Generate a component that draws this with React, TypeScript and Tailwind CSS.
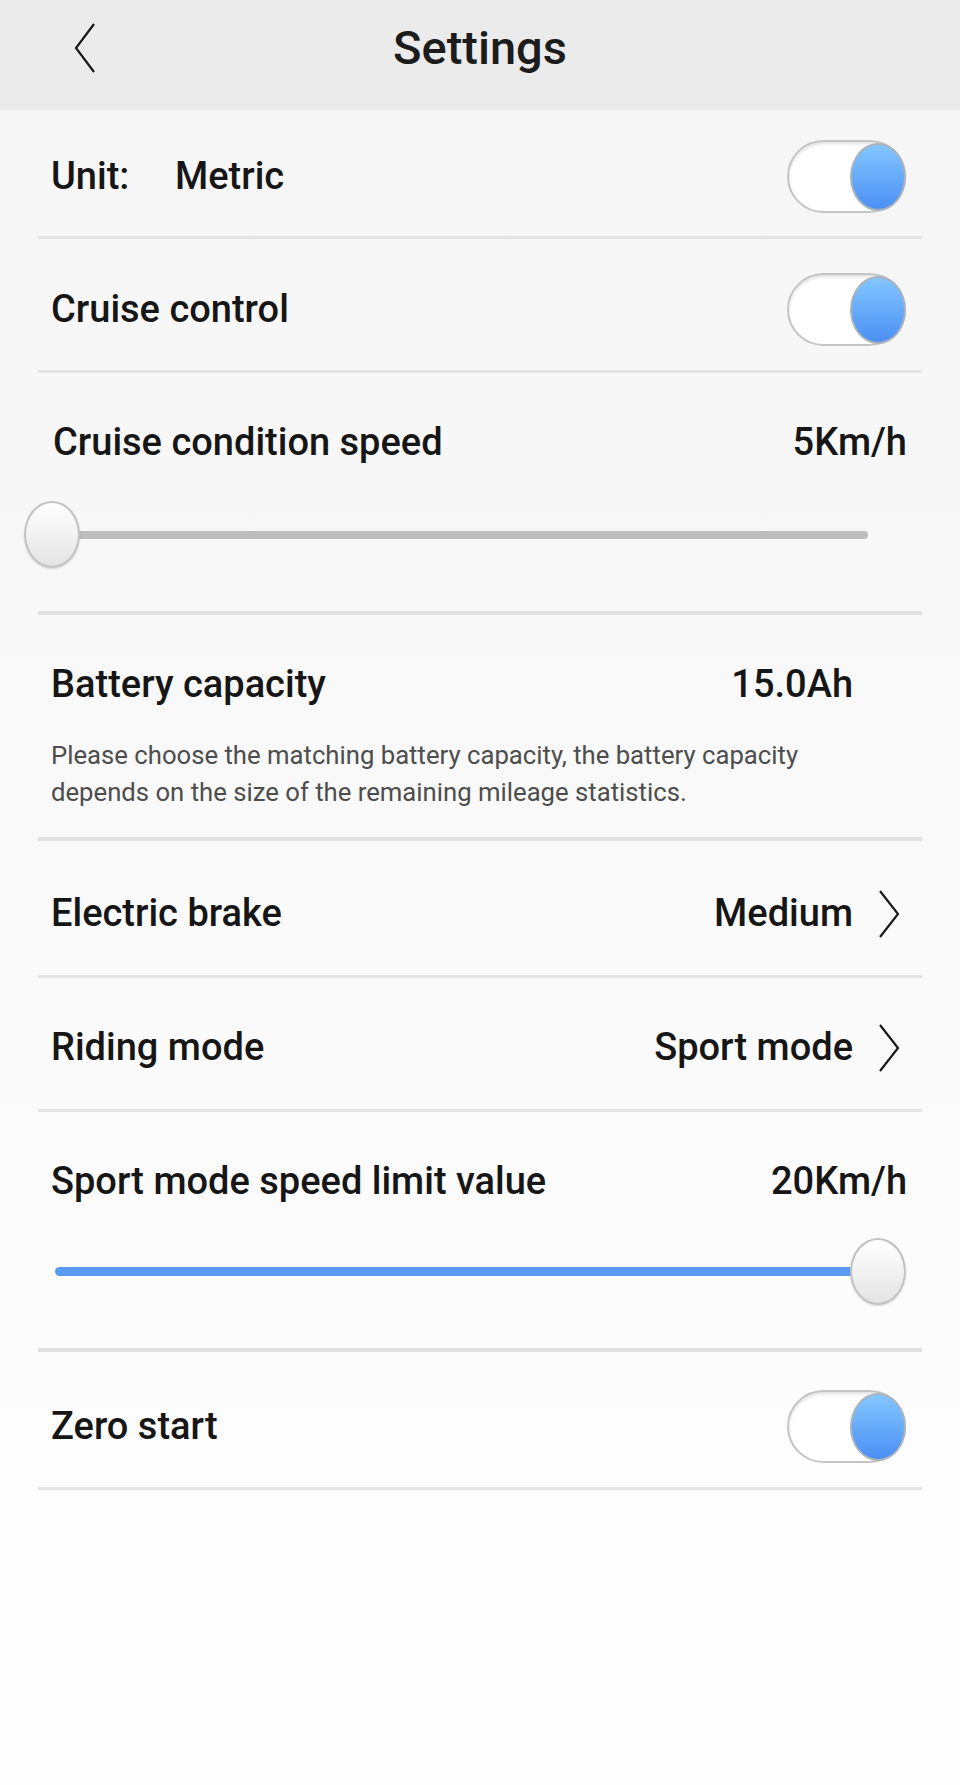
import React from "react";

function Toggle() {
	return (
		<div className="relative w-[119px] h-[73px] shrink-0 rounded-full bg-white border-2 border-[#c4c4c4] shadow-[inset_0_2px_3px_rgba(0,0,0,0.12)]">
			<div className="absolute right-[-2px] top-[1px] w-[56px] h-[68px] rounded-[50%] bg-linear-to-b from-[#84c6ff] to-[#4b8ff4] border-2 border-[#a9b3bd]" />
		</div>
	);
}

function Chevron() {
	return (
		<svg width="22" height="48" viewBox="0 0 22 48" className="ml-[25px] mr-[6px] shrink-0">
			<path d="M2 1 L20 24 L2 47" fill="none" stroke="#1a1a1a" strokeWidth="2.2" />
		</svg>
	);
}

function Divider({ thick }: { thick?: boolean }) {
	return thick ? (
		<div className="mx-[38px] h-[4px] bg-[#e1e1e1]" />
	) : (
		<div className="mx-[38px] h-[3px] bg-[#e4e4e4]" />
	);
}

function Knob() {
	return (
		<div className="w-[56px] h-[67px] rounded-[50%] bg-linear-to-b from-white to-[#e4e4e4] border-2 border-[#c2c2c2] shadow-[0_1px_2px_rgba(0,0,0,0.15)]" />
	);
}

export default function App() {
	const label = "text-[38px] leading-[39px] font-medium text-[#161616]";

	return (
		<div
			className="min-h-[1785px] bg-linear-to-b from-[#f5f5f5] to-[#fefefe]"
			style={{ fontFamily: 'Roboto, "Liberation Sans", Arial, sans-serif' }}
		>
			<header className="relative h-[110px] bg-[#ebebeb] flex justify-center pt-[24px]">
				<svg width="22" height="50" viewBox="0 0 22 50" className="absolute left-[74px] top-[23px]">
					<path d="M20 1 L2 25 L20 49" fill="none" stroke="#1a1a1a" strokeWidth="2.2" />
				</svg>
				<h1 className="text-[47px] leading-[48px] font-medium text-[#1c1c1c]">Settings</h1>
			</header>

			{/* unit */}
			<div className="h-[126px] pt-[6px] pl-[51px] pr-[54px] flex items-center justify-between">
				<div className={`${label} flex`}>
					<span className="w-[124px]">Unit:</span>
					<span>Metric</span>
				</div>
				<Toggle />
			</div>
			<Divider />

			<div className="h-[131px] pt-[9px] pl-[51px] pr-[54px] flex items-center justify-between">
				<span className={label}>Cruise control</span>
				<Toggle />
			</div>
			<Divider />

			{/* cruise speed slider */}
			<div className="h-[238px] pt-[50px]">
				<div className="pl-[53px] pr-[53px] flex justify-between">
					<span className={label}>Cruise condition speed</span>
					<span className={label}>5Km/h</span>
				</div>
				<div className="relative mt-[39px] ml-[24px] mr-[92px] h-[67px] flex items-center">
					<div className="ml-[40px] flex-1 h-[8px] rounded-full bg-[#bdbdbd]" />
					<div className="absolute left-0 top-0">
						<Knob />
					</div>
				</div>
			</div>
			<Divider thick />

			{/* battery */}
			<div className="h-[222px] pt-[50px] pl-[51px] pr-[54px]">
				<div className="flex items-center justify-end">
					<span className={`${label} flex-1`}>Battery capacity</span>
					<span className={label}>15.0Ah</span>
					<div className="w-[53px]" />
				</div>
				<p className="mt-[33px] text-[25.7px] leading-[37px] text-[#4d4d4d]">
					Please choose the matching battery capacity, the battery capacity
					<br />
					depends on the size of the remaining mileage statistics.
				</p>
			</div>
			<Divider thick />

			<div className="h-[134px] pt-[11px] pl-[51px] pr-[54px] flex items-center">
				<span className={`${label} flex-1`}>Electric brake</span>
				<span className={label}>Medium</span>
				<Chevron />
			</div>
			<Divider />

			<div className="h-[131px] pt-[8px] pl-[51px] pr-[54px] flex items-center">
				<span className={`${label} flex-1`}>Riding mode</span>
				<span className={label}>Sport mode</span>
				<Chevron />
			</div>
			<Divider />

			{/* sport speed slider */}
			<div className="h-[236px] pt-[50px]">
				<div className="pl-[51px] pr-[53px] flex justify-between">
					<span className={label}>Sport mode speed limit value</span>
					<span className={label}>20Km/h</span>
				</div>
				<div className="relative mt-[37px] ml-[55px] mr-[54px] h-[67px] flex items-center">
					<div className="mr-[40px] flex-1 h-[9px] rounded-full bg-[#5a9cf2]" />
					<div className="absolute right-0 top-0">
						<Knob />
					</div>
				</div>
			</div>
			<Divider thick />

			<div className="h-[135px] pt-[13px] pl-[51px] pr-[54px] flex items-center justify-between">
				<span className={label}>Zero start</span>
				<Toggle />
			</div>
			<Divider />
		</div>
	);
}
